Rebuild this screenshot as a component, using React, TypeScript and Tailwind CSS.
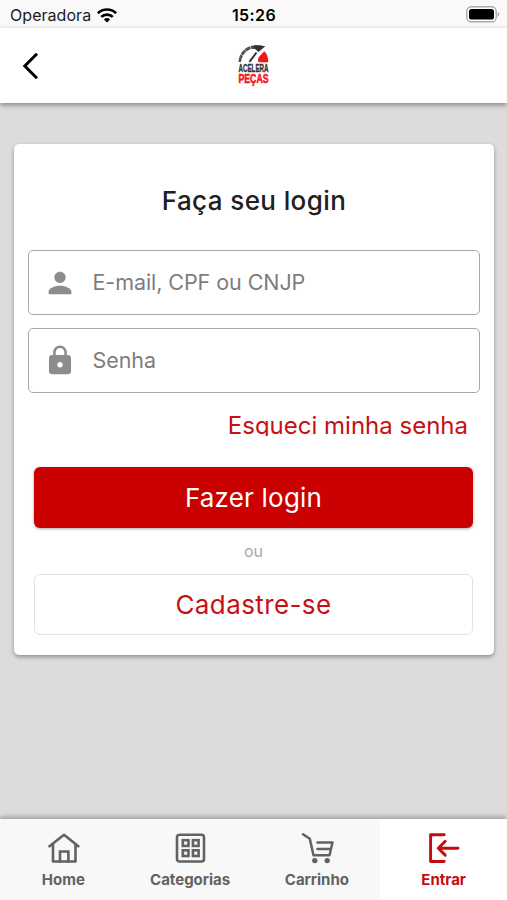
import { useState, type ReactNode } from 'react'
import { clsx } from 'clsx'

function WifiIcon() {
  return (
    <svg width="20" height="15" viewBox="0 0 20 15" fill="none" stroke="#000" strokeWidth="2.7">
      <path d="M0.9 5.2a13 13 0 0 1 18.2 0" />
      <path d="M4.2 8.9a8.3 8.3 0 0 1 11.6 0" />
      <path d="M10 14.6 6.9 11.5a4.5 4.5 0 0 1 6.2 0z" fill="#000" stroke="none" />
    </svg>
  )
}

function BatteryIcon() {
  return (
    <svg width="34" height="17" viewBox="0 0 34 17">
      <rect x="0.8" y="0.8" width="29.4" height="15" rx="4.6" fill="#fff" stroke="#a9a9a9" strokeWidth="1.4" />
      <rect x="3" y="3" width="25" height="10.6" rx="2.6" fill="#000" />
      <path d="M31.6 6v4.8c1-.4 1.7-1.3 1.7-2.4S32.6 6.4 31.6 6z" fill="#a9a9a9" />
    </svg>
  )
}

function Logo() {
  return (
    <svg width="34" height="44" viewBox="0 0 34 44">
      <path d="M1.5 18C2 9 8 2.200 17 1.200c3-.3 5 0 7.500.6l-3.500 4C17.500 4.800 13.800 4.700 11 6.500 7 9 4.800 12.500 4 18z" fill="#555" />
      <path d="M3 10l4.500 2M7 5l3.500 3.700M13.200 1.800l1 4.500" stroke="#fff" strokeWidth="0.6" />
      <path d="M15.500 2.500c4.500-1.300 9-1.200 12.800-.3L21.500 8z" fill="#333" />
      <path d="M19.500 8.500 12.500 17.800" stroke="#333" strokeWidth="2" />
      <path d="M21.500 13.500 27.200 7.300c2.600 2 4 5.700 4.100 10.900h-9.800c-.6-1.500-.6-3.200 0-4.700z" fill="#f4141c" />
      <text x="1.500" y="28" textLength="30" lengthAdjust="spacingAndGlyphs" fontFamily="'Liberation Sans', sans-serif" fontWeight="700" fontSize="10.500" fill="#333" stroke="#333" strokeWidth="0.4">ACELERA</text>
      <text x="1.500" y="39.200" textLength="30" lengthAdjust="spacingAndGlyphs" fontFamily="'Liberation Sans', sans-serif" fontWeight="700" fontSize="13.500" fill="#f4141c" stroke="#f4141c" strokeWidth="0.6">PEÇAS</text>
    </svg>
  )
}

function PersonIcon() {
  return (
    <svg width="34" height="34" viewBox="0 0 24 24" fill="#8c8c8c">
      <path d="M12 12c2.210 0 4-1.790 4-4s-1.790-4-4-4-4 1.790-4 4 1.790 4 4 4zm0 2c-2.670 0-8 1.340-8 4v2h16v-2c0-2.660-5.330-4-8-4z" />
    </svg>
  )
}

function LockIcon() {
  return (
    <svg width="34" height="33" viewBox="0 0 24 24" fill="#8c8c8c">
      <path d="M18 8h-1V6c0-2.760-2.240-5-5-5S7 3.240 7 6v2H6c-1.100 0-2 .9-2 2v10c0 1.100.9 2 2 2h12c1.100 0 2-.9 2-2V10c0-1.100-.9-2-2-2zm-6 9c-1.100 0-2-.9-2-2s.9-2 2-2 2 .9 2 2-.9 2-2 2zm3.100-9H8.900V6c0-1.710 1.390-3.100 3.100-3.100 1.710 0 3.100 1.390 3.100 3.100v2z" />
    </svg>
  )
}

function HomeIcon() {
  return (
    <svg width="34" height="32" viewBox="0 0 34 32" fill="none" stroke="currentColor" strokeWidth="2.6" strokeLinejoin="round" strokeLinecap="round">
      <path d="M3.500 14.200 18 2.800l14.300 11.400" />
      <path d="M7 12.500v17h22.500v-17" />
      <path d="M14 29.500v-10h8.400v10" strokeLinejoin="miter" />
    </svg>
  )
}

function GridIcon() {
  return (
    <svg width="34" height="32" viewBox="0 0 34 32" fill="none" stroke="currentColor" strokeWidth="2.6">
      <rect x="4" y="2.7" width="27" height="26.8" rx="2.5" />
      <rect x="9.8" y="8.2" width="5.7" height="5.7" />
      <rect x="19.9" y="8.2" width="5.7" height="5.7" />
      <rect x="9.8" y="18.3" width="5.7" height="5.7" />
      <rect x="19.9" y="18.3" width="5.7" height="5.7" />
    </svg>
  )
}

function CartIcon() {
  return (
    <svg width="34" height="32" viewBox="0 0 34 32" fill="none" stroke="currentColor" strokeWidth="2.5" strokeLinecap="round" strokeLinejoin="round">
      <path d="M3 2.3 9.8 6.700 13.500 23.200h16L32.500 10.500H17.500M17.500 17h12.500" />
      <circle cx="14.8" cy="28.6" r="2.7" fill="currentColor" stroke="none" />
      <circle cx="27.2" cy="28.6" r="2.7" fill="currentColor" stroke="none" />
    </svg>
  )
}

function EnterIcon() {
  return (
    <svg width="34" height="32" viewBox="0 0 34 32" fill="none" stroke="currentColor" strokeWidth="2.9" strokeLinecap="round" strokeLinejoin="round">
      <path d="M17.200 2.700H3.600v26.800h13.600" />
      <path d="M31 16.200H11.500M18.200 9.300 11.300 16.200l6.900 6.900" />
    </svg>
  )
}

interface FieldProps {
  icon: ReactNode
  type: string
  placeholder: string
}

function Field({ icon, type, placeholder }: FieldProps) {
  return (
    <label className="flex h-[65px] items-center rounded-[5px] border-[1.5px] border-[#a8a8a8] pl-[14px]">
      {icon}
      <input
        type={type}
        placeholder={placeholder}
        className="ml-[15.5px] min-w-0 flex-1 bg-transparent text-[21.5px] tracking-[-0.07px] outline-none placeholder:text-[#7d7d7d]"
      />
    </label>
  )
}

const tabs = [
  { id: 'home', label: 'Home', icon: <HomeIcon /> },
  { id: 'categorias', label: 'Categorias', icon: <GridIcon /> },
  { id: 'carrinho', label: 'Carrinho', icon: <CartIcon /> },
  { id: 'entrar', label: 'Entrar', icon: <EnterIcon /> },
]

export default function App() {
  const [activeTab, setActiveTab] = useState('entrar')

  return (
    <div className="flex h-[900px] w-[507px] flex-col overflow-hidden bg-[#dcdcdc] font-['Inter',sans-serif]">
      {/* Status bar */}
      <div className="grid h-7 shrink-0 grid-cols-3 items-center bg-[#f9f9f9] pr-[7px] pl-[10px] text-[16px] text-[#1c1c1c]">
        <div className="flex items-center gap-[6px] pt-[2px]">
          <span className="tracking-[0.05px]">Operadora</span>
          <WifiIcon />
        </div>
        <span className="pt-[2px] pr-[2px] text-center font-semibold tracking-[0.4px] text-black">15:26</span>
        <div className="flex justify-end">
          <BatteryIcon />
        </div>
      </div>

      {/* Header */}
      <header className="z-10 grid h-[75px] shrink-0 grid-cols-3 items-center bg-white px-[22px] shadow-[0_2px_5px_rgba(0,0,0,0.4)]">
        <button aria-label="Voltar">
          <svg width="18" height="28" viewBox="0 0 18 28" fill="none" stroke="#000" strokeWidth="3">
            <path d="M15 1.8 2.8 14 15 26.2" />
          </svg>
        </button>
        <div className="flex justify-center pl-[2px]">
          <Logo />
        </div>
      </header>

      {/* Login card */}
      <main className="flex-1 pt-[41px] pr-[13px] pl-[14px]">
        <div className="flex h-[511px] flex-col rounded-[5px] bg-white px-[14px] shadow-[0_2px_4px_rgba(0,0,0,0.35)]">
          <h1 className="mt-[39px] h-[35px] text-center text-[26px] leading-[35px] font-[450] tracking-[0.4px] text-[#202020]">
            Faça seu login
          </h1>
          <div className="mt-[32px] flex flex-col gap-[13px]">
            <Field icon={<PersonIcon />} type="text" placeholder="E-mail, CPF ou CNJP" />
            <Field icon={<LockIcon />} type="password" placeholder="Senha" />
          </div>
          {/* the line box is short enough to trim the descender */}
          <a href="#" className="mt-[17px] mr-[12px] h-[26px] self-end overflow-hidden text-[24px] leading-[31px] text-[#c80f14]">
            Esqueci minha senha
          </a>
          <div className="mt-[31px] flex flex-col pr-[7px] pl-[6px]">
            <button className="h-[61px] rounded-[6px] bg-[#cb0000] text-[26px] tracking-[0.2px] text-white shadow-[0_1px_3px_rgba(0,0,0,0.35)]">
              Fazer login
            </button>
            <span className="my-[11px] h-6 text-center text-[16px] leading-6 text-[#a8a8a8]">ou</span>
            <button className="h-[61px] rounded-[6px] border-[1.5px] border-[#e2e2e2] text-[26px] tracking-[0.4px] text-[#c80f14]">
              Cadastre-se
            </button>
          </div>
        </div>
      </main>

      {/* Bottom tabs */}
      <nav className="grid h-[81px] shrink-0 grid-cols-4 bg-[#f8f8f8] shadow-[0_-2px_5px_rgba(0,0,0,0.3)]">
        {tabs.map((tab) => (
          <button
            key={tab.id}
            onClick={() => setActiveTab(tab.id)}
            className={clsx(
              'flex flex-col items-center pt-[13px] text-[15px] leading-[22px] font-bold',
              activeTab === tab.id ? 'bg-white text-[#c60a10]' : 'text-[#626262]',
            )}
          >
            {tab.icon}
            <span className="mt-[5px]">{tab.label}</span>
          </button>
        ))}
      </nav>
    </div>
  )
}
